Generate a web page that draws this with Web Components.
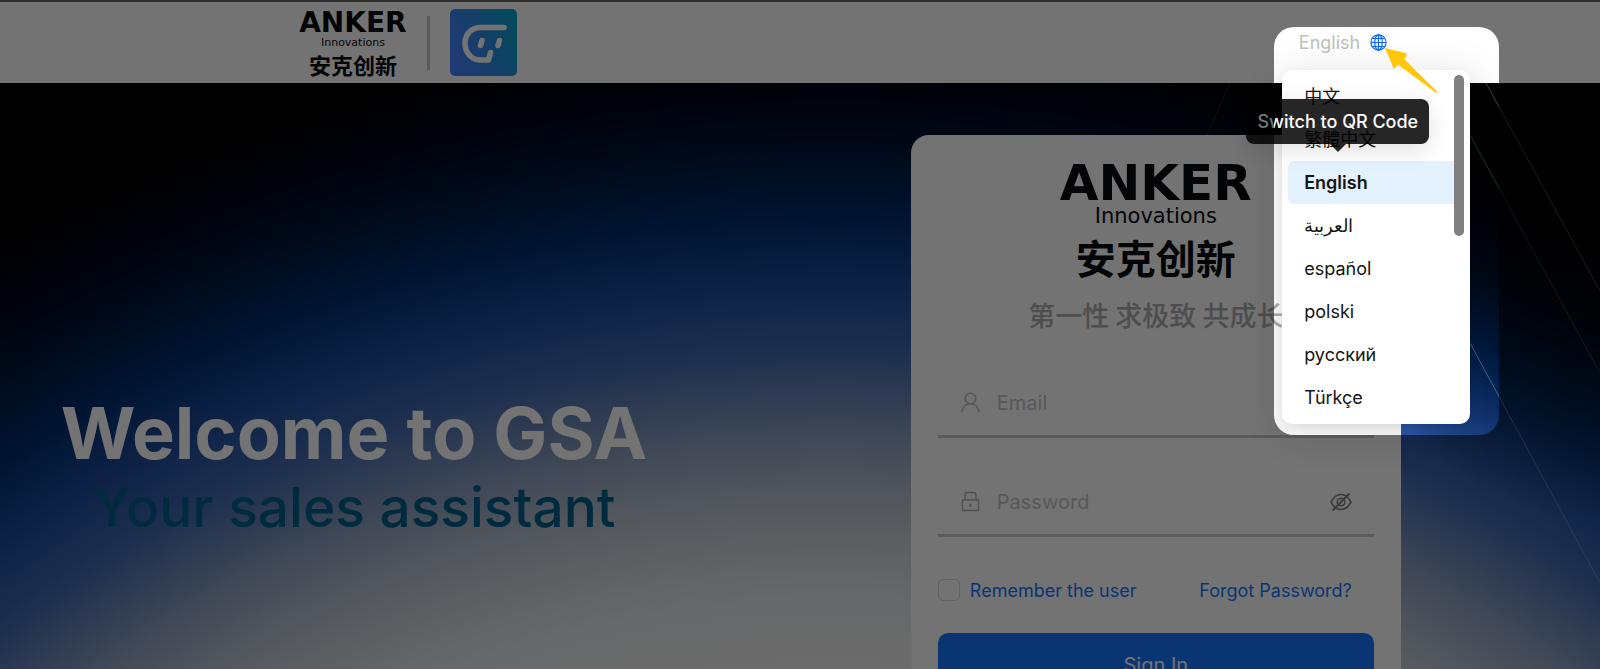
<!DOCTYPE html>
<html lang="en">
<head>
<meta charset="utf-8">
<meta name="viewport" content="width=device-width, initial-scale=1">
<title>GSA Sign In</title>
<style>
    body {
        margin: 0;
        font-family: Inter, "Noto Sans CJK SC", sans-serif;
    }
</style>
</head>
<body>
<gsa-page>
    <gsa-header slot="header">
        <brand-logo></brand-logo>
        <app-icon></app-icon>
        <language-picker slot="actions" current="English"></language-picker>
    </gsa-header>
    <welcome-banner>
        Welcome to GSA
        <span slot="tagline">Your sales assistant</span>
    </welcome-banner>
    <login-card></login-card>
</gsa-page>

<script>
// Page frame: header on top, hero with the night sky below
class GsaPage extends HTMLElement {
    constructor() {
        super();
        this.attachShadow({ mode: 'open' });
    }

    connectedCallback() {
        this.shadowRoot.innerHTML = `
            <style>
                :host {
                    display: flex;
                    flex-direction: column;
                    height: 100vh;
                    overflow: hidden;
                }
                .hero {
                    position: relative;
                    flex: 1;
                    min-height: 0;
                    display: flex;
                    align-items: flex-start;
                    background:
                        radial-gradient(ellipse 20% 75% at 100% 0%, rgba(0, 0, 0, 0.9) 30%, rgba(0, 0, 0, 0) 100%),
                        radial-gradient(ellipse 1660px 1500px at 52% 1417px,
                            #f0f0f0 54%, #e4e6ea 60%, #ccd2da 64%, #b0bccb 67.5%, #8c9ebf 71%,
                            #6480b4 74%, #4268b0 76.5%, #2856a4 79.5%, #12408c 82.5%,
                            #002a68 86%, #001638 90%, #00081c 93.5%, #000 98%);
                }
                .trails {
                    position: absolute;
                    top: 0;
                    right: 0;
                }
            </style>
            <slot name="header"></slot>
            <main class="hero">
                <svg class="trails" width="400" height="586" viewBox="0 0 400 586" fill="none" aria-hidden="true">
                    <path d="M286 0 400 208" stroke="#8a96a8" stroke-opacity=".45"/>
                    <path d="M270 52 400 290" stroke="#2f8fb0" stroke-opacity=".4"/>
                    <path d="M270 260 400 500" stroke="#8fc4e8" stroke-opacity=".4"/>
                    <path d="M30 0 5 56" stroke="#3f7f9f" stroke-opacity=".3"/>
                </svg>
                <slot></slot>
            </main>
        `;
    }
}

class GsaHeader extends HTMLElement {
    constructor() {
        super();
        this.attachShadow({ mode: 'open' });
    }

    connectedCallback() {
        this.shadowRoot.innerHTML = `
            <style>
                :host {
                    position: relative;
                    z-index: 2;
                    display: flex;
                    flex: none;
                    height: 81px;
                    border-top: 2px solid #666;
                    background: #fff;
                }
                .brand {
                    display: flex;
                    align-items: center;
                    gap: 20px;
                    margin-left: 18.7%;
                }
                .actions {
                    display: flex;
                    margin-left: auto;
                    margin-right: 13.3%;
                }
            </style>
            <div class="brand"><slot></slot></div>
            <div class="actions"><slot name="actions"></slot></div>
        `;
    }
}

// Company wordmark, "large" is used on the login card
class BrandLogo extends HTMLElement {
    constructor() {
        super();
        this.attachShadow({ mode: 'open' });
    }

    connectedCallback() {
        this.shadowRoot.innerHTML = `
            <style>
                :host {
                    display: flex;
                    flex-direction: column;
                    align-items: center;
                    color: #08090c;
                }
                .name {
                    font: bold 28px/28px "DejaVu Sans", sans-serif;
                }
                .sub {
                    font: 11px/12px "DejaVu Sans", sans-serif;
                }
                .zh {
                    margin-top: 2px;
                    font: bold 22px/26px "Noto Sans CJK SC", sans-serif;
                }
                :host([size="large"]) .name {
                    font-size: 50px;
                    line-height: 44px;
                }
                :host([size="large"]) .sub {
                    font-size: 21px;
                    line-height: 22px;
                }
                :host([size="large"]) .zh {
                    margin-top: 6px;
                    font-size: 40px;
                    line-height: 48px;
                }
            </style>
            <span class="name">ANKER</span>
            <span class="sub">Innovations</span>
            <span class="zh" lang="zh-CN">安克创新</span>
        `;
    }
}

class AppIcon extends HTMLElement {
    constructor() {
        super();
        this.attachShadow({ mode: 'open' });
    }

    connectedCallback() {
        this.shadowRoot.innerHTML = `
            <style>
                :host {
                    display: flex;
                    align-items: center;
                    gap: 20px;
                }
                .divider {
                    width: 3px;
                    height: 54px;
                    background: #c8c8c8;
                }
            </style>
            <span class="divider"></span>
            <svg width="67" height="67" viewBox="0 0 67 67" role="img" aria-label="GSA">
                <defs>
                    <linearGradient id="fill" x1="0" y1=".6" x2="1" y2=".2">
                        <stop offset="0" stop-color="#4680ff"/>
                        <stop offset=".5" stop-color="#2c8ce6"/>
                        <stop offset="1" stop-color="#06a4cc"/>
                    </linearGradient>
                </defs>
                <rect width="67" height="67" rx="5" fill="url(#fill)"/>
                <g fill="none" stroke="#fff" stroke-linecap="round" stroke-linejoin="round">
                    <path d="M54 18.500H31C20 18.500 15 26 15 34.500C15 44 22 51 31 51H38.500L40.500 43.500" stroke-width="5.500"/>
                    <path d="M32 31.500 30.500 36.500M49.500 31.500 48 36.500" stroke-width="5.500"/>
                </g>
            </svg>
        `;
    }
}

// Language button with its open menu and the guide spotlight around both
class LanguagePicker extends HTMLElement {
    constructor() {
        super();
        this.attachShadow({ mode: 'open' });
    }

    connectedCallback() {
        const current = this.getAttribute('current');
        const languages = ['中文', '繁體中文', 'English', 'العربية', 'español', 'polski', 'русский', 'Türkçe'];
        const items = languages.map(name => `
            <li><button type="button" role="option" aria-selected="${name === current}">${name}</button></li>
        `).join('');

        this.shadowRoot.innerHTML = `
            <style>
                :host {
                    position: relative;
                    display: flex;
                    align-items: center;
                }
                button {
                    border: 0;
                    padding: 0;
                    background: none;
                    font: inherit;
                }
                .toggle {
                    display: flex;
                    align-items: center;
                    gap: 10px;
                    color: #bfbfbf;
                    font-size: 18px;
                }
                .menu {
                    position: absolute;
                    top: 68px;
                    right: -83px;
                    width: 188px;
                    box-sizing: border-box;
                    padding: 5px 6px;
                    border-radius: 10px;
                    background: #fff;
                    box-shadow: 0 9px 40px 8px rgba(0, 0, 0, 0.1), 0 3px 10px rgba(0, 0, 0, 0.06);
                }
                ul {
                    margin: 0;
                    padding: 0;
                    list-style: none;
                }
                li button {
                    display: block;
                    width: 100%;
                    height: 43px;
                    padding: 0 16px;
                    border-radius: 6px;
                    color: #141414;
                    font-size: 18px;
                    line-height: 24px;
                    text-align: left;
                }
                li button[aria-selected="true"] {
                    background: #e4f2ff;
                    font-weight: 600;
                }
                .thumb {
                    position: absolute;
                    top: 5px;
                    right: 6px;
                    width: 10px;
                    height: 161px;
                    border-radius: 5px;
                    background: #808080;
                }
                .tip {
                    position: absolute;
                    top: 97px;
                    right: -42px;
                    padding: 0 11px;
                    border-radius: 8px;
                    background: rgba(0, 0, 0, 0.85);
                    box-shadow: 0 6px 24px rgba(0, 0, 0, 0.12);
                    color: #fff;
                    font-size: 18px;
                    font-weight: 500;
                    line-height: 45px;
                    white-space: nowrap;
                }
                .tip::after {
                    content: "";
                    position: absolute;
                    top: 100%;
                    left: 50%;
                    margin-left: -8px;
                    border: 8px solid transparent;
                    border-top-color: rgba(0, 0, 0, 0.85);
                    border-bottom: 0;
                }
                guide-spotlight {
                    position: absolute;
                    top: 25px;
                    right: -112px;
                }
            </style>
            <button class="toggle" type="button" aria-haspopup="listbox" aria-expanded="true">
                ${current}
                <svg width="17" height="17" viewBox="0 0 17 17" fill="none" stroke="#1468f5" stroke-width="1.200" aria-hidden="true">
                    <circle cx="8.500" cy="8.500" r="7.600"/>
                    <ellipse cx="8.500" cy="8.500" rx="3.800" ry="7.600"/>
                    <path d="M8.500 1V16M1 8.500H16M2.200 4.500H14.800M2.200 12.500H14.800"/>
                </svg>
            </button>
            <div class="menu">
                <ul role="listbox" aria-label="Language">${items}</ul>
                <span class="thumb"></span>
            </div>
            <div class="tip" role="tooltip">Switch to QR Code</div>
            <guide-spotlight></guide-spotlight>
        `;
    }
}

// Dims everything outside its rounded box
class GuideSpotlight extends HTMLElement {
    constructor() {
        super();
        this.attachShadow({ mode: 'open' });
    }

    connectedCallback() {
        this.shadowRoot.innerHTML = `
            <style>
                :host {
                    width: 225px;
                    height: 408px;
                    border-radius: 20px;
                    box-shadow: 0 0 0 200vmax rgba(0, 0, 0, 0.55);
                    pointer-events: none;
                }
                svg {
                    display: block;
                    margin: 21px 0 0 111px;
                }
            </style>
            <svg width="54" height="46" viewBox="0 0 54 46" aria-hidden="true">
                <path d="M0 0 22 5.500 19.500 11.500 52 43.500Q53 45.500 50.500 44.500L13 16.500 9 21Z" fill="#ffc60a"/>
            </svg>
        `;
    }
}

class WelcomeBanner extends HTMLElement {
    constructor() {
        super();
        this.attachShadow({ mode: 'open' });
    }

    connectedCallback() {
        this.shadowRoot.innerHTML = `
            <style>
                :host {
                    display: block;
                    position: relative;
                    flex: 0 0 44.25%;
                    padding-top: 308px;
                    text-align: center;
                    white-space: nowrap;
                }
                h1 {
                    margin: 0;
                    color: #fff;
                    font: bold 72px/84px Inter, sans-serif;
                }
                p {
                    margin: 0;
                    color: #00608a;
                    font: 500 55px/64px Inter, sans-serif;
                }
            </style>
            <h1><slot></slot></h1>
            <p><slot name="tagline"></slot></p>
        `;
    }
}

// One underlined input with an icon in front
class LoginField extends HTMLElement {
    constructor() {
        super();
        this.attachShadow({ mode: 'open' });
    }

    connectedCallback() {
        const label = this.getAttribute('label');
        const type = this.getAttribute('type');

        this.shadowRoot.innerHTML = `
            <style>
                :host {
                    display: flex;
                    align-items: center;
                    height: 65px;
                    padding: 0 22px;
                    border-bottom: 3px solid #cacaca;
                }
                label {
                    display: flex;
                    margin-right: 16px;
                }
                input {
                    flex: 1;
                    min-width: 0;
                    border: 0;
                    padding: 0;
                    background: none;
                    outline: none;
                    font: 20px/28px Inter, sans-serif;
                }
                input::placeholder {
                    color: #c4c4c4;
                }
            </style>
            <label for="field"><slot name="icon"></slot></label>
            <input id="field" type="${type}" placeholder="${label}" aria-label="${label}">
            <slot name="suffix"></slot>
        `;
    }
}

class LoginCard extends HTMLElement {
    constructor() {
        super();
        this.attachShadow({ mode: 'open' });
    }

    connectedCallback() {
        this.shadowRoot.innerHTML = `
            <style>
                :host {
                    position: relative;
                    display: block;
                    box-sizing: border-box;
                    width: 490px;
                    margin: 52px 12.45% 0 auto;
                    padding: 26px 27px 64px;
                    border-radius: 18px;
                    background: #fff;
                }
                .slogan {
                    margin: 14px 0 35px;
                    color: #adadad;
                    font: 500 27px/40px "Noto Sans CJK SC", sans-serif;
                    text-align: center;
                }
                login-field {
                    margin-bottom: 31px;
                }
                .reveal {
                    display: flex;
                    border: 0;
                    padding: 0;
                    background: none;
                }
                .row {
                    display: flex;
                    align-items: center;
                    justify-content: space-between;
                    height: 44px;
                    padding-right: 22px;
                    font-size: 18px;
                }
                .row label {
                    display: flex;
                    align-items: center;
                    gap: 10px;
                }
                .row label, a {
                    color: #1677ff;
                    text-decoration: none;
                }
                input {
                    appearance: none;
                    width: 22px;
                    height: 22px;
                    margin: 0;
                    border: 1px solid #d9d9d9;
                    border-radius: 5px;
                }
                .submit {
                    display: block;
                    width: 100%;
                    height: 64px;
                    margin-top: 21px;
                    border: 0;
                    border-radius: 10px;
                    background: #1677ff;
                    color: #fff;
                    font: 20px Inter, sans-serif;
                }
            </style>
            <brand-logo size="large"></brand-logo>
            <p class="slogan" lang="zh-CN">第一性 求极致 共成长</p>
            <login-field label="Email" type="text">
                <svg slot="icon" width="21" height="21" viewBox="0 0 21 21" fill="none" stroke="#bdbdbd" stroke-width="1.500" aria-hidden="true">
                    <circle cx="10.500" cy="6.500" r="5.300"/>
                    <path d="M2 20C2.500 15 6 11.800 10.500 11.800S18.500 15 19 20"/>
                </svg>
            </login-field>
            <login-field label="Password" type="password">
                <svg slot="icon" width="21" height="21" viewBox="0 0 21 21" fill="none" stroke="#b4b4b4" stroke-width="1.500" aria-hidden="true">
                    <rect x="2.500" y="9" width="16" height="10.500"/>
                    <path d="M5 9V4Q5 1.500 7.500 1.500H13.500Q16 1.500 16 4V9"/>
                    <path d="M10.500 12.500V16" stroke-width="1.800"/>
                </svg>
                <button slot="suffix" class="reveal" type="button" aria-label="Show password">
                    <svg width="22" height="20" viewBox="0 0 22 20" fill="none" stroke="#808080" stroke-width="1.600">
                        <path d="M1 10Q5 2.500 11 2.500T21 10Q17 17.500 11 17.500T1 10Z"/>
                        <circle cx="11" cy="10" r="3.800"/>
                        <path d="M2.500 18.500 19.500 1.500" stroke-width="2"/>
                    </svg>
                </button>
            </login-field>
            <div class="row">
                <label><input type="checkbox">Remember the user</label>
                <a href="#">Forgot Password?</a>
            </div>
            <button class="submit" type="button">Sign In</button>
        `;
    }
}

customElements.define('gsa-page', GsaPage);
customElements.define('gsa-header', GsaHeader);
customElements.define('brand-logo', BrandLogo);
customElements.define('app-icon', AppIcon);
customElements.define('guide-spotlight', GuideSpotlight);
customElements.define('language-picker', LanguagePicker);
customElements.define('welcome-banner', WelcomeBanner);
customElements.define('login-field', LoginField);
customElements.define('login-card', LoginCard);
</script>
</body>
</html>
